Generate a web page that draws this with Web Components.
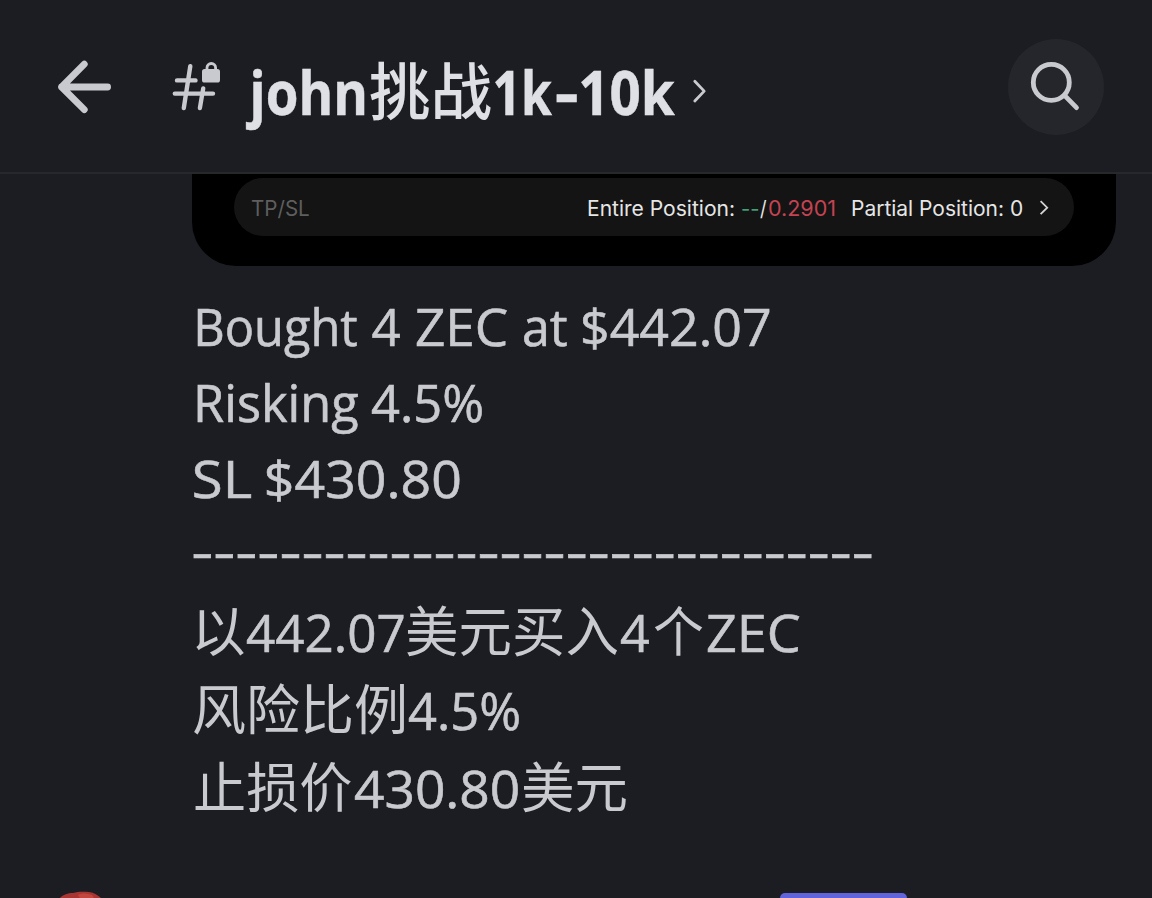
<!DOCTYPE html>
<html lang="zh-CN">
<head>
<meta charset="utf-8">
<title>john挑战1k-10k</title>
<style>
  html, body { height: 100%; margin: 0; }
  body {
    overflow: hidden;
    background: #1c1d22;
    color: #c9cad0;
    font-family: "Open Sans", "Noto Sans CJK SC", sans-serif;
  }
</style>
</head>
<body>
<chat-screen>
  <channel-header slot="header">
    <fit-run ink="118" bold>john</fit-run><fit-run ink="121" gap="6.5" han>挑战</fit-run><fit-run ink="57.5" gap="4" bold>1k</fit-run><fit-run ink="21" gap="3.5" bold>-</fit-run><fit-run ink="94.5" gap="3.5" bold>10k</fit-run>
  </channel-header>

  <position-card>
    <fit-run slot="label" ink="58">TP/SL</fit-run>
    <fit-run ink="146">Entire Position: </fit-run>
    <fit-run class="up" ink="17" gap="7.5">--</fit-run>
    <fit-run ink="7" gap="1.2">/</fit-run>
    <fit-run class="down" ink="65.5" gap="1.5">0.2901</fit-run>
    <fit-run ink="170" gap="18">Partial Position: 0</fit-run>
  </position-card>

  <chat-message>
    <chat-line><fit-run ink="160.5" gap="5">Bought </fit-run><fit-run ink="28" gap="15">4 </fit-run><fit-run ink="91" gap="15.5">ZEC </fit-run><fit-run ink="43.5" gap="16.5">at </fit-run><fit-run ink="186.5" gap="15.5">$442.07</fit-run></chat-line>
    <chat-line><fit-run ink="161" gap="5">Risking </fit-run><fit-run ink="110" gap="14">4.5%</fit-run></chat-line>
    <chat-line><fit-run ink="57.5" gap="1.5">SL </fit-run><fit-run ink="192.5" gap="15.5">$430.80</fit-run></chat-line>
    <chat-line rule><fit-run ink="678" gap="2.3">-------------------------------</fit-run></chat-line>
    <chat-line han><fit-run ink="48.5" gap="3.5" han>以</fit-run><fit-run ink="156.5" gap="2.5">442.07</fit-run><fit-run ink="211" gap="3.5" han>美元买入</fit-run><fit-run ink="28.5" gap="3.5">4</fit-run><fit-run ink="49" gap="4" han>个</fit-run><fit-run ink="92.5" gap="4">ZEC</fit-run></chat-line>
    <chat-line han><fit-run ink="210" gap="2" han>风险比例</fit-run><fit-run ink="110" gap="5">4.5%</fit-run></chat-line>
    <chat-line han><fit-run ink="156.5" gap="2.7" han>止损价</fit-run><fit-run ink="163" gap="4">430.80</fit-run><fit-run ink="103" gap="5" han>美元</fit-run></chat-line>
  </chat-message>

  <next-message slot="footer"></next-message>
</chat-screen>

<script>
const pen = document.createElement('canvas').getContext('2d')

// A run of text whose inked width is set by the "ink" attribute.
// "gap" is the space between the previous run and the first stroke.
class FitRun extends HTMLElement {
  constructor() {
    super()
    this.attachShadow({mode: 'open'})
    this.shadowRoot.innerHTML = `
      <style>
        :host { display: block; flex: none; -webkit-text-stroke: var(--stroke, 0) currentColor; }
        :host([bold]) { font-weight: 700; }
        :host([han]) {
          font-family: "Noto Sans CJK SC", sans-serif;
          font-size: var(--han-size, 1em);
          font-weight: var(--han-weight, 400);
          -webkit-text-stroke: 0;
        }
        :host(.up) { color: #43a179; }
        :host(.down) { color: #c44352; }
        span { display: inline-block; white-space: pre; transform-origin: 0 50%; }
      </style>
      <span><slot></slot></span>
    `
  }

  connectedCallback() {
    const style = getComputedStyle(this)
    const span = this.shadowRoot.querySelector('span')
    const ink = Number(this.getAttribute('ink'))
    pen.font = `${style.fontWeight} ${style.fontSize} ${style.fontFamily}`
    const box = pen.measureText(this.textContent.trim())
    const scale = ink / (box.actualBoundingBoxRight + box.actualBoundingBoxLeft)
    span.style.transform = `translateX(${box.actualBoundingBoxLeft * scale}px) scaleX(${scale})`
    this.style.width = `${ink}px`
    this.style.marginLeft = `${this.getAttribute('gap') || 0}px`
  }
}

class ChannelHeader extends HTMLElement {
  constructor() {
    super()
    this.attachShadow({mode: 'open'})
    this.shadowRoot.innerHTML = `
      <style>
        :host {
          display: flex;
          align-items: flex-start;
          box-sizing: border-box;
          height: 174px;
          padding: 39px 48px 0 54px;
          border-bottom: 2px solid #27282c;
          color: #c9cad0;
        }
        svg { display: block; flex: none; fill: none; stroke: currentColor; stroke-linecap: round; stroke-linejoin: round; }
        .hash { margin-left: 54px; }
        .title {
          --han-size: 62px;
          --han-weight: 500;
          --stroke: .5px;
          display: flex;
          align-items: baseline;
          height: 96px;
          margin-left: 21.5px;
          line-height: 99px;
          font-size: 60px;
          color: #dfe0e6;
        }
        .chevron { margin-left: 15.5px; }
        .search {
          width: 96px;
          height: 96px;
          margin-left: auto;
          border-radius: 50%;
          background: #25262b;
        }
      </style>
      <svg width="62" height="96" viewBox="54 39 62 96" stroke-width="6.8">
        <path d="M84.3 64.2 61.6 87l22.7 22.6M61.6 87h46"/>
      </svg>
      <svg class="hash" width="54" height="96" viewBox="170 39 54 96" stroke-width="4.4">
        <path d="M190.3 66.2 183.8 108M203.2 88.5 199.9 108M177 80.4h18.5M174.8 93.6h38.2"/>
        <path d="M207 70v-2.2a4.3 4.3 0 0 1 8.6 0V70" stroke-width="2.8"/>
        <rect x="202" y="69" width="18" height="13.5" rx="2.6" fill="currentColor" stroke="none"/>
      </svg>
      <div class="title"><slot></slot></div>
      <svg class="chevron" width="18" height="96" viewBox="691 39 18 96" stroke-width="2.8">
        <path d="m694.8 81.2 9.4 9.9-9.4 9.9"/>
      </svg>
      <div class="search">
        <svg width="96" height="96" viewBox="1008 39 96 96" stroke-width="4.8">
          <circle cx="1051.3" cy="82.4" r="18"/>
          <path d="m1064.5 95.4 12 12.2"/>
        </svg>
      </div>
    `
  }
}

class PositionCard extends HTMLElement {
  constructor() {
    super()
    this.attachShadow({mode: 'open'})
    this.shadowRoot.innerHTML = `
      <style>
        :host {
          display: block;
          box-sizing: border-box;
          width: 924px;
          height: 92px;
          padding: 4px 42px 0;
          border-radius: 0 0 44px 44px;
          background: #000;
        }
        .pill {
          display: flex;
          align-items: center;
          box-sizing: border-box;
          height: 58px;
          padding: 3px 24px 0 17px;
          border-radius: 29px;
          background: #141414;
          color: #e6e6e6;
          font: 20.8px/30px Inter, sans-serif;
        }
        .label { color: #5e5e5e; }
        .values { display: flex; margin-left: auto; }
        svg { margin: -1px 0 0 16px; fill: none; stroke: #d4d4d4; stroke-width: 1.8; }
      </style>
      <div class="pill">
        <div class="label"><slot name="label"></slot></div>
        <div class="values"><slot></slot></div>
        <svg width="12" height="18" viewBox="0 0 12 18"><path d="m2.6 2.2 6.6 6.5-6.6 6.5"/></svg>
      </div>
    `
  }
}

class ChatLine extends HTMLElement {
  constructor() {
    super()
    this.attachShadow({mode: 'open'})
    this.shadowRoot.innerHTML = `
      <style>
        :host { display: flex; align-items: baseline; height: 76px; line-height: 76px; }
        :host([rule]) { height: 74px; line-height: 69px; }
        :host([han]) { height: 78px; line-height: 78px; }
      </style>
      <slot></slot>
    `
  }
}

class ChatMessage extends HTMLElement {
  constructor() {
    super()
    this.attachShadow({mode: 'open'})
    this.shadowRoot.innerHTML = `
      <style>
        :host {
          --han-size: 54px;
          --stroke: .6px;
          display: flex;
          flex-direction: column;
          margin-top: 22px;
          font-size: 51px;
        }
      </style>
      <slot></slot>
    `
  }
}

// Only the top edge of the following message is in view.
class NextMessage extends HTMLElement {
  constructor() {
    super()
    this.attachShadow({mode: 'open'})
    this.shadowRoot.innerHTML = `
      <style>
        :host {
          display: flex;
          justify-content: space-between;
          align-items: flex-end;
          height: 8px;
          padding: 0 245px 0 56px;
          overflow: hidden;
        }
        svg { display: block; }
        .tag { width: 127px; height: 5px; border-radius: 7px 7px 0 0; background: #6063dc; }
      </style>
      <svg width="50" height="8" viewBox="0 0 50 8">
        <path d="M4 8c3-3.500 8-5 13-5 5-1.500 10-1.500 16-1 5 .8 9 3 12 6z" fill="#a93532"/>
        <path d="M22 5c4-2 9-2 14 0l2 3H24z" fill="#c4473f"/>
      </svg>
      <div class="tag"></div>
    `
  }
}

class ChatScreen extends HTMLElement {
  constructor() {
    super()
    this.attachShadow({mode: 'open'})
    this.shadowRoot.innerHTML = `
      <style>
        :host { display: flex; flex-direction: column; height: 898px; overflow: hidden; }
        main { flex: 1; min-height: 0; padding-left: 192px; }
      </style>
      <slot name="header"></slot>
      <main><slot></slot></main>
      <slot name="footer"></slot>
    `
  }
}

// Containers go first, so that runs are measured with their inherited fonts.
customElements.define('chat-screen', ChatScreen)
customElements.define('channel-header', ChannelHeader)
customElements.define('position-card', PositionCard)
customElements.define('chat-message', ChatMessage)
customElements.define('chat-line', ChatLine)
customElements.define('next-message', NextMessage)
customElements.define('fit-run', FitRun)
</script>
</body>
</html>
